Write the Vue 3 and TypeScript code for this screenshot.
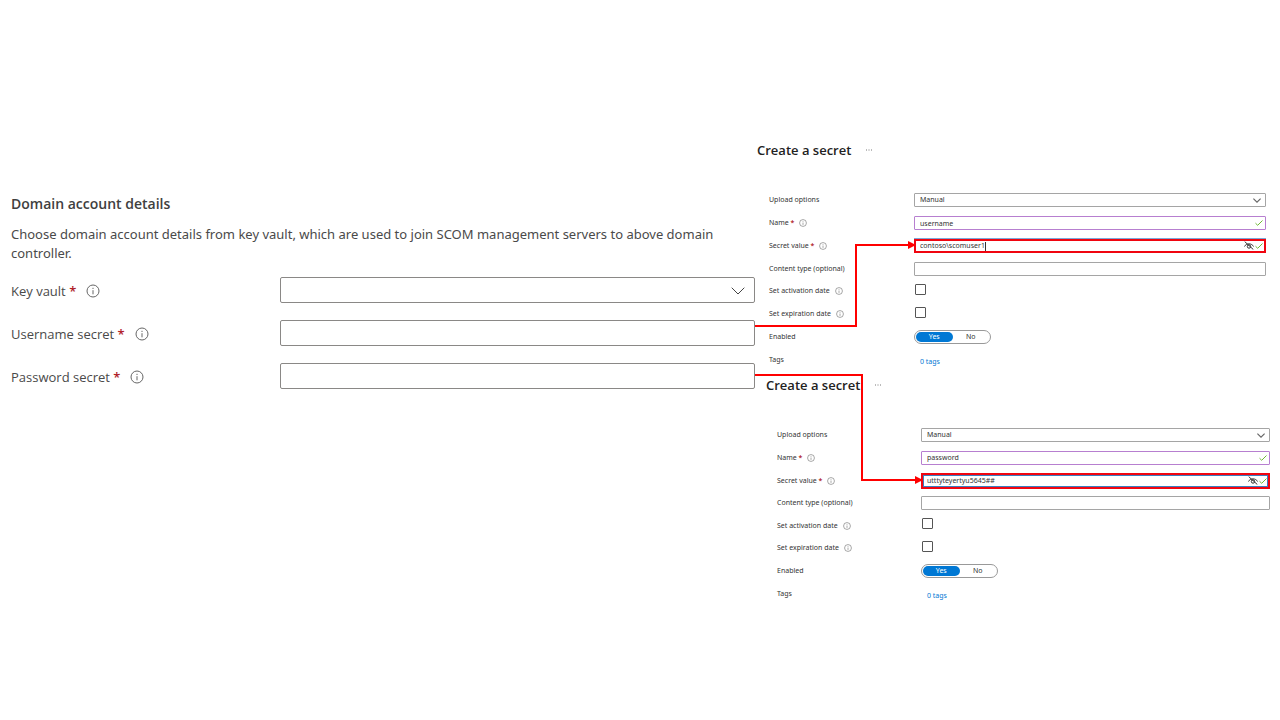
<script setup lang="ts">
import { nextTick, onBeforeUnmount, onMounted, ref } from 'vue'

interface SecretPanel {
  id: string
  name: string
  value: string
  editing: boolean
}

const panels: SecretPanel[] = [
  { id: 'user', name: 'username', value: 'contoso\\scomuser1', editing: true },
  { id: 'pass', name: 'password', value: 'utttyteyertyu5645##', editing: false },
]

const dates = [
  { key: 'activation', label: 'Set activation date' },
  { key: 'expiration', label: 'Set expiration date' },
]

const accountInputs = [
  { id: 'username-secret', label: 'Username secret' },
  { id: 'password-secret', label: 'Password secret' },
]

interface Connector {
  line: string
  head: string
}

const page = ref<HTMLElement | null>(null)
const connectors = ref<Connector[]>([])

/* Elbow lines run from each secret field to the matching secret value box. */
function route(fromId: string, toId: string, lift: number, elbow: number): Connector | null {
  const root = page.value?.getBoundingClientRect()
  const from = document.getElementById(fromId)?.getBoundingClientRect()
  const to = document.getElementById(toId)?.getBoundingClientRect()
  if (!root || !from || !to) return null
  const x1 = Math.round(from.right - root.left)
  const y1 = Math.round(from.top + from.height / 2 - root.top) - lift
  const x2 = Math.round(to.left - root.left)
  const y2 = Math.floor(to.top + to.height / 2 - root.top - 0.5)
  const mid = x2 - elbow
  return {
    line: `M${x1} ${y1}H${mid}V${y2}H${x2 - 5}`,
    head: `M${x2 - 6} ${y2 - 4}L${x2 + 2} ${y2}L${x2 - 6} ${y2 + 4}Z`,
  }
}

function draw(): void {
  connectors.value = [
    route('username-secret', 'user-value', 7, 58),
    route('password-secret', 'pass-value', 1, 59),
  ].filter((c): c is Connector => c !== null)
}

onMounted(async () => {
  await nextTick()
  draw()
  window.addEventListener('resize', draw)
})
onBeforeUnmount(() => window.removeEventListener('resize', draw))
</script>

<template>
  <main ref="page" class="page">
    <section class="account">
      <h2>Domain account details</h2>
      <p>
        Choose domain account details from key vault, which are used to join SCOM management servers to above domain
        controller.
      </p>
      <div class="account-fields">
        <div class="account-row">
          <div class="caption">
            <label for="key-vault">Key vault <b>*</b></label>
            <svg class="info" viewBox="0 0 14 14"><circle cx="7" cy="7" r="6" /><path d="M7 6.2V10.3M7 3.8V5" /></svg>
          </div>
          <div class="control">
            <select id="key-vault"><option></option></select>
            <svg class="chevron" viewBox="0 0 14 8"><path d="M.7.7L7 7L13.3.7" /></svg>
          </div>
        </div>
        <div v-for="f in accountInputs" :key="f.id" class="account-row">
          <div class="caption">
            <label :for="f.id">{{ f.label }} <b>*</b></label>
            <svg class="info" viewBox="0 0 14 14"><circle cx="7" cy="7" r="6" /><path d="M7 6.2V10.3M7 3.8V5" /></svg>
          </div>
          <div class="control"><input :id="f.id" type="text" /></div>
        </div>
      </div>
    </section>

    <div class="secrets">
      <section v-for="p in panels" :key="p.id" class="secret" :class="p.id">
        <header>
          <h2>Create a secret</h2>
          <button type="button" class="more" aria-label="More">
            <svg viewBox="0 0 8 2"><path d="M1 1h1M3.5 1h1M6 1h1" /></svg>
          </button>
        </header>
        <div class="rows">
          <div class="row">
            <label :for="p.id + '-upload'">Upload options</label>
            <div class="control">
              <select :id="p.id + '-upload'"><option>Manual</option></select>
              <svg class="chevron" viewBox="0 0 14 8"><path d="M.7.7L7 7L13.3.7" /></svg>
            </div>
          </div>
          <div class="row">
            <div class="caption">
              <label :for="p.id + '-name'">Name <b>*</b></label>
              <svg class="info" viewBox="0 0 14 14"><circle cx="7" cy="7" r="6" /><path d="M7 6.2V10.3M7 3.8V5" /></svg>
            </div>
            <div class="control valid">
              <input :id="p.id + '-name'" type="text" :value="p.name" />
              <svg class="tick" viewBox="0 0 8 6"><path d="M.5 3.2L2.7 5.3L7.5.5" /></svg>
            </div>
          </div>
          <div class="row">
            <div class="caption">
              <label :for="p.id + '-value'">Secret value <b>*</b></label>
              <svg class="info" viewBox="0 0 14 14"><circle cx="7" cy="7" r="6" /><path d="M7 6.2V10.3M7 3.8V5" /></svg>
            </div>
            <div class="control marked">
              <input :id="p.id + '-value'" type="text" :value="p.value" />
              <span v-if="p.editing" class="caret"></span>
              <svg class="eye" viewBox="0 0 10 9">
                <path d="M.5 5.5C2 2 8 2 9.5 5.5M.7.6L9.3 8.5" />
                <circle cx="5" cy="5.5" r="1.7" />
              </svg>
              <svg class="tick" viewBox="0 0 8 6"><path d="M.5 3.2L2.7 5.3L7.5.5" /></svg>
            </div>
          </div>
          <div class="row">
            <label :for="p.id + '-type'">Content type (optional)</label>
            <div class="control"><input :id="p.id + '-type'" type="text" /></div>
          </div>
          <div v-for="d in dates" :key="d.key" class="row">
            <div class="caption">
              <label :for="p.id + '-' + d.key">{{ d.label }}</label>
              <svg class="info" viewBox="0 0 14 14"><circle cx="7" cy="7" r="6" /><path d="M7 6.2V10.3M7 3.8V5" /></svg>
            </div>
            <div class="check"><input :id="p.id + '-' + d.key" type="checkbox" /></div>
          </div>
          <div class="row">
            <span>Enabled</span>
            <div class="toggle" role="group" aria-label="Enabled">
              <button type="button" class="on" aria-pressed="true">Yes</button>
              <button type="button" aria-pressed="false">No</button>
            </div>
          </div>
          <div class="row">
            <span>Tags</span>
            <div class="tags"><a href="#">0 tags</a></div>
          </div>
        </div>
      </section>
    </div>

    <svg class="wires" aria-hidden="true">
      <g v-for="(c, i) in connectors" :key="i">
        <path class="wire" :d="c.line" />
        <path class="head" :d="c.head" />
      </g>
    </svg>
  </main>
</template>

<style>
body {
  margin: 0;
  background: #fff;
}
</style>

<style scoped>
.page {
  position: relative;
  display: grid;
  grid-template-columns: 744fr 525fr;
  align-items: start;
  min-height: 100vh;
  padding: 140px 0 0 11px;
  box-sizing: border-box;
  font-family: "Noto Sans", "Open Sans", sans-serif;
  color: #4a4a4a;
}

h2,
p {
  margin: 0;
}

h2 {
  font-family: "Open Sans", "Noto Sans", sans-serif;
  font-weight: 600;
  line-height: 20px;
}

b {
  color: #b01e28;
  font-weight: 600;
}

input,
select {
  box-sizing: border-box;
  width: 100%;
  margin: 0;
  border: 1px solid #8a8886;
  border-radius: 2px;
  background: #fff;
  color: #333;
  font: inherit;
  outline: none;
  appearance: none;
}

svg {
  display: block;
  fill: none;
}

.info {
  flex: none;
  stroke: #666;
}

.caption {
  display: flex;
  align-items: center;
}

.control {
  position: relative;
  display: flex;
  min-width: 0;
}

.chevron {
  position: absolute;
  stroke: #444;
  pointer-events: none;
}

/* Domain account form */
.account {
  padding-top: 54px;
}

.account h2 {
  margin-bottom: 11px;
  font-size: 14px;
  color: #404040;
}

.account p {
  padding-right: 24px;
  font-size: 13px;
  line-height: 19px;
}

.account-fields {
  display: grid;
  gap: 17px;
  margin-top: 14px;
}

.account-row {
  display: grid;
  grid-template-columns: 269fr 475fr;
  align-items: center;
  font-family: "Open Sans", "Noto Sans", sans-serif;
  font-size: 13px;
}

.account-row .caption {
  gap: 10px;
  padding-top: 1px;
}

.account-row .info {
  width: 14px;
  height: 14px;
}

.account-row input,
.account-row select {
  height: 26px;
}

.account-row .chevron {
  top: 10px;
  right: 10px;
  width: 14px;
  height: 8px;
}

/* Secret panels */
.secrets {
  display: grid;
  gap: 4px;
}

.secret {
  padding: 0 14px 0 2px;
}

.secret.pass {
  padding: 0 10px 0 11px;
}

.secret header {
  display: flex;
  align-items: center;
  gap: 14px;
  height: 20px;
  margin-bottom: 29px;
}

.secret h2 {
  font-size: 13px;
  color: #222;
}

.more {
  padding: 0;
  border: 0;
  background: none;
}

.more svg {
  width: 8px;
  height: 2px;
  stroke: #777;
}

.rows {
  display: grid;
  grid-template-rows: repeat(8, 1fr);
  height: 182px;
  padding-left: 12px;
  font-size: 7px;
  line-height: 10px;
  color: #333;
}

.row {
  display: grid;
  grid-template-columns: 145px 1fr;
  align-items: center;
}

.pass .rows {
  height: 181px;
  padding-left: 11px;
}

.pass .row {
  grid-template-columns: 144px 1fr;
}

.row .caption {
  gap: 5px;
}

.row .info {
  width: 8px;
  height: 8px;
}

.row input,
.row select {
  height: 14px;
  padding: 0 5px;
  border-color: #a5a5a5;
  border-radius: 1px;
}

.row .chevron {
  top: 5px;
  right: 5px;
  width: 8px;
  height: 5px;
  stroke: #666;
  stroke-width: 2;
}

.row .valid input {
  border-color: #b77fd0;
}

.row .marked input {
  border: 2px solid #f00510;
  padding: 0 4px;
  border-radius: 0;
}

.user .marked input {
  box-shadow: 0 -1px #7da7d9;
}

.pass .marked input {
  height: 16px;
  box-shadow: inset 0 0 0 1px #3a7ec0;
}

.tick {
  position: absolute;
  top: 4px;
  right: 3px;
  width: 8px;
  height: 6px;
  stroke: #6fb934;
}

.eye {
  position: absolute;
  top: 2px;
  right: 12px;
  width: 10px;
  height: 9px;
  stroke: #333;
}

.pass .eye {
  top: 3px;
}

.pass .marked .tick {
  top: 5px;
}

.caret {
  position: absolute;
  top: 3px;
  left: 71px;
  width: 1px;
  height: 9px;
  background: #333;
}

.row input[type='checkbox'] {
  display: block;
  width: 11px;
  height: 11px;
  padding: 0;
  border-color: #555;
}

.check {
  padding: 0 0 4px 1px;
}

.toggle {
  display: flex;
  box-sizing: border-box;
  width: 77px;
  height: 14px;
  padding: 1px;
  border: 1px solid #999;
  border-radius: 7px;
}

.toggle button {
  flex: 1;
  padding: 0;
  border: 0;
  border-radius: 5px;
  background: none;
  color: #333;
  font: inherit;
}

.toggle .on {
  background: #0078d4;
  color: #fff;
}

.tags {
  padding: 4px 0 0 6px;
}

.tags a {
  color: #0078d4;
  text-decoration: none;
}

.wires {
  position: absolute;
  inset: 0;
  width: 100%;
  height: 100%;
  pointer-events: none;
}

.wire {
  stroke: #f00;
  stroke-width: 2;
}

.head {
  fill: #f00;
}
</style>
